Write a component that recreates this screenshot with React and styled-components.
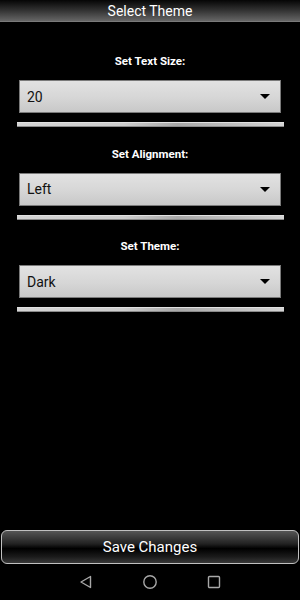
import React from 'react';
import styled, { createGlobalStyle } from 'styled-components';

const GlobalStyle = createGlobalStyle`
  html, body {
    margin: 0;
    padding: 0;
    background: #000;
  }
  body {
    font-family: Roboto, "Liberation Sans", sans-serif;
  }
`;

const Screen = styled.div`
  width: 300px;
  height: 600px;
  display: flex;
  flex-direction: column;
  background: #000;
  overflow: hidden;
`;

const Header = styled.header`
  height: 21px;
  display: flex;
  align-items: center;
  justify-content: center;
  background: linear-gradient(to bottom, #050505 0%, #333 50%, #666 100%);
  border-bottom: 1px solid #7a7a7a;
  color: #fff;
  font-size: 14px;
`;

const Content = styled.main`
  flex: 1;
  display: flex;
  flex-direction: column;
  padding-top: 32px;
`;

const Section = styled.section`
  display: flex;
  flex-direction: column;
  align-items: center;
  margin-bottom: 19.5px;
`;

const Label = styled.div`
  color: #fff;
  font-weight: bold;
  font-size: 11.5px;
  line-height: 14px;
  margin-bottom: 12px;
`;

const Select = styled.div`
  box-sizing: border-box;
  width: 262px;
  height: 33px;
  display: flex;
  align-items: center;
  justify-content: space-between;
  padding: 0 10px 0 7px;
  background: linear-gradient(to bottom, #e2e2e2 0%, #d6d6d6 55%, #c8c8c8 100%);
  border: 1px solid #7a7a7a;
  color: #111;
  font-size: 14px;
`;

const Arrow = styled.span`
  width: 0;
  height: 0;
  border-left: 5px solid transparent;
  border-right: 5px solid transparent;
  border-top: 5px solid #000;
`;

const Divider = styled.div`
  box-sizing: border-box;
  width: 267px;
  height: 5px;
  margin-top: 9px;
  background: linear-gradient(to right, #d4d4d4 0%, #cdcdcd 40%, #a8a8a8 60%, #d4d4d4 100%);
  border-top: 1px solid #e0e0e0;
  border-bottom: 1px solid #8a8a8a;
`;

const Footer = styled.div`
  display: flex;
  flex-direction: column;
  align-items: center;
`;

const SaveButton = styled.button`
  box-sizing: border-box;
  width: 298px;
  height: 34px;
  border: 1px solid #c0c0c0;
  border-radius: 6px;
  background: linear-gradient(to bottom, #555 0%, #222 40%, #000 55%, #1a1a1a 80%, #383838 100%);
  color: #fff;
  font-family: Roboto, "Liberation Sans", sans-serif;
  font-size: 15px;
  padding: 0;
`;

const NavBar = styled.nav`
  height: 36px;
  width: 100%;
  display: flex;
  align-items: center;
  justify-content: center;
  gap: 50px;
`;

const NavIcon = styled.svg`
  width: 14px;
  height: 14px;
  stroke: #a8a8a8;
  stroke-width: 1.4;
  fill: none;
`;

const sections = [
  { label: 'Set Text Size:', value: '20' },
  { label: 'Set Alignment:', value: 'Left' },
  { label: 'Set Theme:', value: 'Dark' },
];

export default function App() {
  return (
    <Screen>
      <GlobalStyle />
      <Header>Select Theme</Header>
      <Content>
        {sections.map((s) => (
          <Section key={s.label}>
            <Label>{s.label}</Label>
            <Select>
              <span>{s.value}</span>
              <Arrow />
            </Select>
            <Divider />
          </Section>
        ))}
      </Content>
      <Footer>
        <SaveButton>Save Changes</SaveButton>
        <NavBar>
          <NavIcon viewBox="0 0 14 14">
            <path d="M11.5 1.5 L2 7 L11.5 12.5 Z" strokeLinejoin="round" />
          </NavIcon>
          <NavIcon viewBox="0 0 14 14">
            <circle cx="7" cy="7" r="6.2" />
          </NavIcon>
          <NavIcon viewBox="0 0 14 14">
            <rect x="1.5" y="1.5" width="11" height="11" rx="1" />
          </NavIcon>
        </NavBar>
      </Footer>
    </Screen>
  );
}
